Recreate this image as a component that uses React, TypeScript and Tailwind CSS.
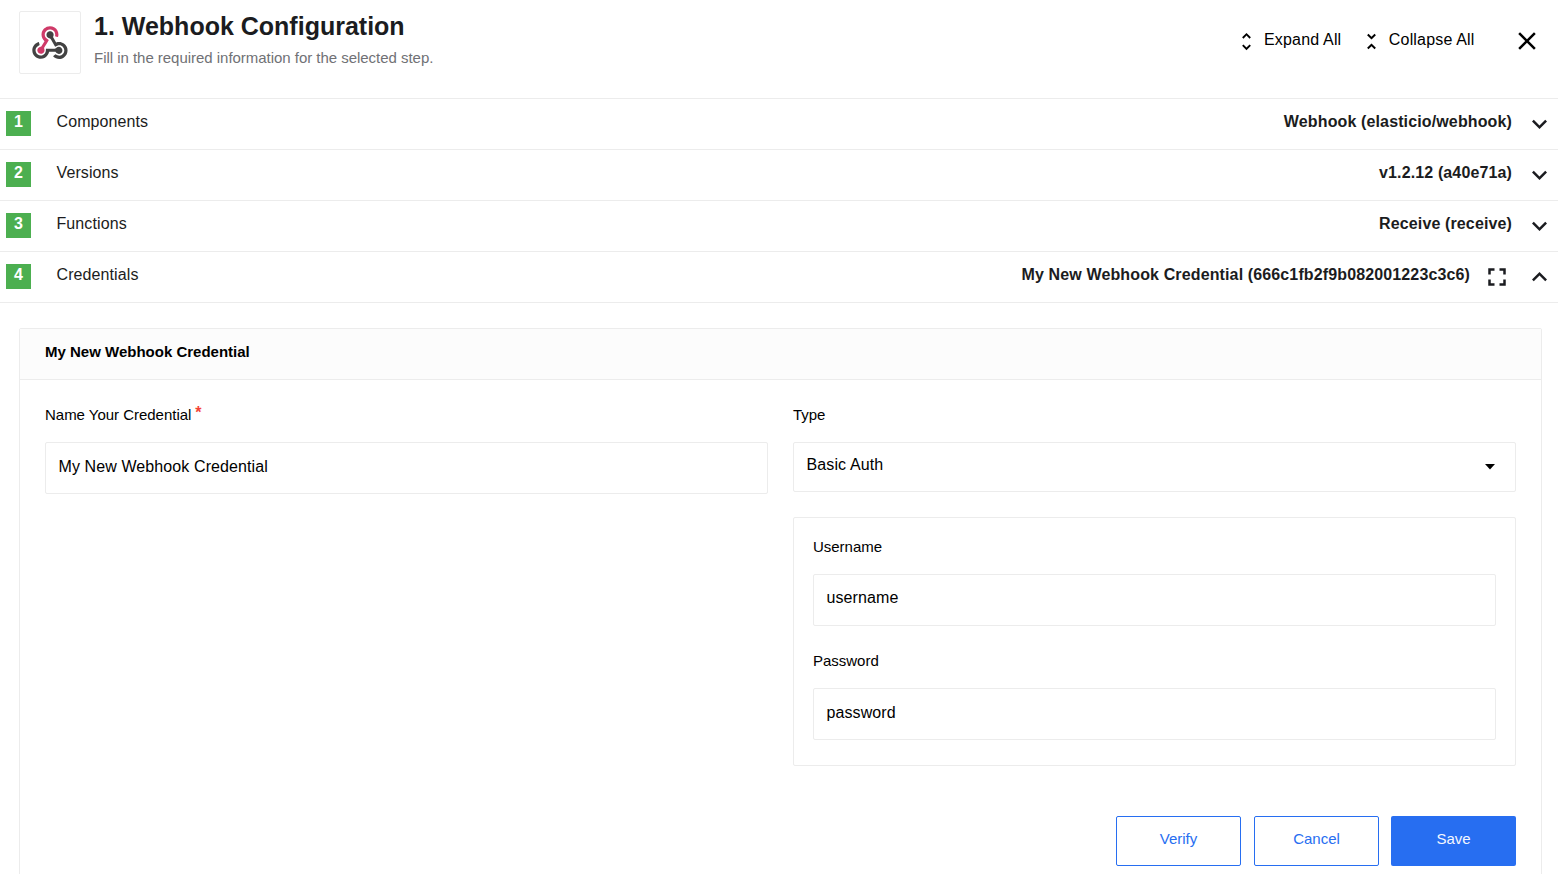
import React from "react";

const paths = {
  down: "M7.41 8.59 12 13.17l4.59-4.58L18 10l-6 6-6-6z",
  up: "M12 8l-6 6 1.41 1.41L12 10.83l4.59 4.58L18 14z",
  close: "M19 6.41 17.59 5 12 10.59 6.41 5 5 6.41 10.59 12 5 17.59 6.41 19 12 13.41 17.59 19 19 17.59 13.41 12z",
  fullscreen: "M7 14H5v5h5v-2H7v-3zm-2-4h2V7h3V5H5v5zm12 7h-3v2h5v-5h-2v3zM14 5v2h3v3h2V5h-5z",
  expand: "M12 5.83 15.17 9l1.41-1.41L12 3 7.41 7.59 8.83 9 12 5.83zm0 12.34L8.83 15l-1.41 1.41L12 21l4.59-4.59L15.17 15 12 18.17z",
  collapse: "M7.41 18.59 8.83 20 12 16.83 15.17 20l1.41-1.41L12 14l-4.59 4.59zm9.18-13.18L15.17 4 12 7.17 8.83 4 7.41 5.41 12 10l4.59-4.59z",
};

function Icon({ name, className }: { name: keyof typeof paths; className: string }) {
  return (
    <svg viewBox="0 0 24 24" fill="currentColor" className={`shrink-0 ${className}`}>
      <path d={paths[name]} />
    </svg>
  );
}

function WebhookLogo() {
  return (
    <svg viewBox="0 0 256 239" className="h-[33px] w-[36px]">
      <path fill="#cf3a68" d="M119.54 100.503c-10.61 17.836-20.775 35.108-31.152 52.25-2.665 4.401-3.984 7.986-1.855 13.58 5.878 15.454-2.414 30.493-17.998 34.575-14.697 3.851-29.016-5.808-31.932-21.543-2.584-13.927 8.224-27.58 23.58-29.757 1.286-.184 2.6-.205 4.762-.367l23.358-39.168C73.612 95.465 64.868 78.39 66.803 57.23c1.368-14.957 7.25-27.883 18-38.477 20.59-20.288 52.002-23.573 76.246-8.001 23.284 14.958 33.948 44.094 24.858 69.031-6.854-1.858-13.756-3.732-21.343-5.79 2.854-13.865.743-26.315-8.608-36.981-6.178-7.042-14.106-10.733-23.12-12.093-18.072-2.73-35.815 8.88-41.08 26.618-5.976 20.132 3.069 36.575 27.784 48.967z" />
      <path fill="#424242" d="M149.841 79.41c7.475 13.187 15.065 26.573 22.587 39.836 38.02-11.763 66.686 9.284 76.97 31.817 12.422 27.219 3.93 59.457-20.465 76.25-25.04 17.238-56.707 14.293-78.892-7.851 5.654-4.733 11.336-9.487 17.407-14.566 21.912 14.192 41.077 13.524 55.305-3.282 12.133-14.337 11.87-35.714-.615-49.75-14.408-16.197-33.707-16.691-57.035-1.143-9.677-17.168-19.522-34.199-28.893-51.491-3.16-5.828-6.648-9.21-13.77-10.443-11.893-2.062-19.571-12.275-20.032-23.717-.453-11.316 6.214-21.545 16.634-25.53 10.322-3.949 22.435-.762 29.378 8.014 5.674 7.17 7.477 15.24 4.491 24.083-.83 2.466-1.905 4.852-3.07 7.774z" />
      <path fill="#424242" d="M167.707 187.21h-45.77c-4.387 18.044-13.863 32.612-30.19 41.876-12.693 7.2-26.373 9.641-40.933 7.29-26.808-4.323-48.728-28.456-50.658-55.63-2.184-30.784 18.975-58.147 47.178-64.293 1.947 7.071 3.915 14.21 5.862 21.264-25.876 13.202-34.832 29.836-27.59 50.636 6.375 18.304 24.484 28.337 44.147 24.457 20.08-3.962 30.204-20.65 28.968-47.432 19.036 0 38.088-.197 57.126.097 7.434.117 13.173-.654 18.773-7.208 9.22-10.784 26.191-9.811 36.121.374 10.148 10.409 9.662 27.157-1.077 37.127-10.361 9.62-26.73 9.106-36.424-1.26-1.992-2.136-3.562-4.673-5.533-7.298z" />
    </svg>
  );
}

const steps = [
  { label: "Components", value: "Webhook (elasticio/webhook)", open: false },
  { label: "Versions", value: "v1.2.12 (a40e71a)", open: false },
  { label: "Functions", value: "Receive (receive)", open: false },
  { label: "Credentials", value: "My New Webhook Credential (666c1fb2f9b082001223c3c6)", open: true },
];

function StepRow({ index, label, value, open }: { index: number; label: string; value: string; open: boolean }) {
  return (
    <div className="flex h-[51px] items-start border-b border-[#ececec] pl-1.5 pr-[3px] text-base leading-6 text-[#1b1c20]">
      <span className="mt-3 h-[25px] w-[25px] bg-[#4caf50] text-center font-bold text-white">
        <span className="block leading-[21px]">{index}</span>
      </span>
      <span className="ml-[25.5px] mt-[11px] tracking-[0.1px]">{label}</span>
      <span className="ml-auto mt-[11px] font-bold tracking-[0.13px]">{value}</span>
      {open && <Icon name="fullscreen" className="ml-3 mt-[10px] h-[30px] w-[30px]" />}
      <Icon name={open ? "up" : "down"} className="ml-3 mt-[10px] h-[30px] w-[31px]" />
    </div>
  );
}

function Label({ children }: { children: React.ReactNode }) {
  return <div className="flex h-5 text-[15px] leading-5 tracking-[-0.02px]">{children}</div>;
}

function TextField({ value, lowered = false }: { value: string; lowered?: boolean }) {
  return (
    <div
      className={`flex h-[52px] items-center rounded-[2px] border border-[#ececec] px-[12.5px] text-base tracking-[0.1px] ${
        lowered ? "pb-0.5" : "pb-1"
      }`}
    >
      {value}
    </div>
  );
}

export default function App() {
  return (
    <div className="h-[874px] w-full overflow-hidden bg-white font-['Liberation_Sans',Arial,sans-serif] text-black">
      <header className="flex h-[99px] items-start border-b border-[#ececec] pl-[19px] pr-4">
        <div className="mt-[11px] flex h-[63px] w-[62px] items-center justify-center rounded-[2px] border border-[#ececec]">
          <WebhookLogo />
        </div>
        <div className="ml-[13px] mt-[10px]">
          <h1 className="text-[25px] font-bold leading-8 text-[#1b1c20]">1. Webhook Configuration</h1>
          <p className="mt-[6px] text-[15px] leading-5 tracking-[-0.03px] text-[#707175]">
            Fill in the required information for the selected step.
          </p>
        </div>
        <div className="ml-auto mt-7 flex items-start text-base leading-6 tracking-[0.17px]">
          <Icon name="expand" className="mt-[2px] h-[23px] w-[23px]" />
          <span className="ml-1.5">Expand All</span>
          <Icon name="collapse" className="ml-[18.5px] mt-[2px] h-[23px] w-[23px]" />
          <span className="ml-1.5">Collapse All</span>
          <Icon name="close" className="-mt-[2px] ml-[37.5px] h-[30px] w-[30px]" />
        </div>
      </header>

      {steps.map((s, i) => (
        <StepRow key={s.label} index={i + 1} {...s} />
      ))}

      <section className="ml-[19px] mr-4 mt-[25px] h-[600px] rounded-[2px] border border-[#ececec]">
        <h2 className="h-[51px] border-b border-[#ececec] bg-[#fcfcfc] pl-[25px] pt-[13px] text-[15px] font-bold leading-5">
          My New Webhook Credential
        </h2>
        <div className="grid grid-cols-2 gap-[25px] px-[25px] pt-[25px]">
          <div>
            <Label>
              Name Your Credential
              <span className="-mt-[2px] ml-1 text-base font-bold leading-5 text-[#f44336]">*</span>
            </Label>
            <div className="mt-[17px]">
              <TextField value="My New Webhook Credential" lowered />
            </div>
          </div>
          <div>
            <Label>Type</Label>
            <div className="mt-[17px] flex h-[50px] items-center justify-between rounded-[2px] border border-[#ececec] pb-1 pl-[12.5px] pr-5 text-base tracking-[0.12px]">
              Basic Auth
              <svg viewBox="0 0 10 5.5" className="mt-1 h-[5.5px] w-[10px]">
                <path d="M0 0h10L5 5.5z" />
              </svg>
            </div>
            <div className="mt-[25px] h-[249px] rounded-[2px] border border-[#ececec] px-[19px] pt-[19px]">
              <Label>Username</Label>
              <div className="mt-[17px]">
                <TextField value="username" />
              </div>
              <div className="mt-[25px]">
                <Label>Password</Label>
              </div>
              <div className="mt-[17px]">
                <TextField value="password" lowered />
              </div>
            </div>
          </div>
        </div>
        <div className="mt-[50px] flex justify-end pr-[25px] text-[15px] leading-5">
          <button className="h-[50px] w-[125px] rounded-[2px] border border-[#276ef1] pb-1 text-[#276ef1]">Verify</button>
          <button className="ml-[13px] h-[50px] w-[125px] rounded-[2px] border border-[#276ef1] pb-1 text-[#276ef1]">Cancel</button>
          <button className="ml-3 h-[50px] w-[125px] rounded-[2px] bg-[#276ef1] pb-1 text-[#f4f7ff]">Save</button>
        </div>
      </section>
    </div>
  );
}
